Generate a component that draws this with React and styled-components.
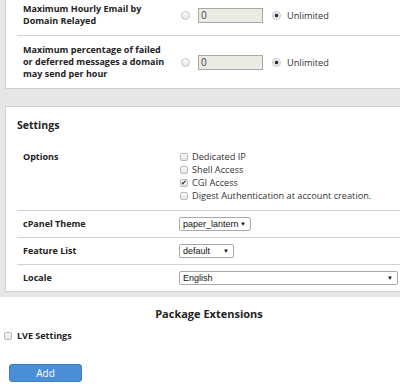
import React from 'react';
import styled, {createGlobalStyle} from 'styled-components';

const GlobalStyle = createGlobalStyle`
    body {
        margin: 0;
        background: #fff;
        font-family: "Open Sans", "DejaVu Sans", sans-serif;
        color: #222;
    }
`;

const Page = styled.div`
    width: 400px;
    height: 390px;
    overflow: hidden;
`;

const Backdrop = styled.div`
    background: #e6e6e6;
    margin-top: -6px;
    padding: 0 0 5px 5px;
    display: flex;
    flex-direction: column;
    gap: 17px;
`;

const Panel = styled.div`
    background: #fff;
    border: 1px solid #cfcfcf;
    border-right: none;
    padding: 0 0 0 11px;
`;

const PanelTitle = styled.h3`
    margin: 0;
    padding: 10px 0 11px 0;
    font-size: 10.5px;
    line-height: 16px;
    font-weight: 700;
    color: #222;
`;

const Row = styled.div`
    display: grid;
    grid-template-columns: 162px 1fr;
    align-items: ${props => props.top ? 'start' : 'center'};
    padding: ${props => props.pad || '6px 0'};
    border-bottom: 1px solid #d2d2d2;
    &:last-child {
        border-bottom: none;
    }
`;

const Label = styled.div`
    padding-left: 6px;
    white-space: pre-line;
    font-size: 9px;
    font-weight: 700;
    line-height: ${props => props.lh || '12px'};
    color: #222;
`;

const Controls = styled.div`
    display: flex;
    align-items: center;
`;

const Radio = styled.span`
    display: inline-block;
    box-sizing: border-box;
    width: 9px;
    height: 9px;
    margin-left: ${props => props.ml || 0}px;
    border-radius: 50%;
    border: 1px solid #c4c4c4;
    background: ${props => props.checked
        ? 'radial-gradient(circle, #333 0 1.6px, #f2f2f2 2.2px)'
        : 'linear-gradient(#fafafa, #e8e8e8)'};
`;

const NumberBox = styled.span`
    box-sizing: border-box;
    width: 65px;
    height: 15px;
    margin-left: 8px;
    padding-left: 2px;
    background: #ebebe4;
    border: 1px solid #a9a9a9;
    font-size: 10px;
    line-height: 13px;
    color: #444;
`;

const RadioText = styled.span`
    margin-left: 6px;
    font-size: 9.2px;
    color: #333;
`;

const CheckList = styled.div`
    display: flex;
    flex-direction: column;
`;

const CheckItem = styled.label`
    display: flex;
    align-items: center;
    height: 13px;
    padding-left: ${props => props.pl ?? 1}px;
    font-size: ${props => props.size || 9.2}px;
    font-weight: ${props => props.bold ? 700 : 400};
    color: ${props => props.bold ? '#222' : '#333'};
`;

const Box = styled.span`
    display: inline-flex;
    align-items: center;
    justify-content: center;
    box-sizing: border-box;
    width: 8px;
    height: 8px;
    margin-right: ${props => props.gap || 4}px;
    border: 1px solid #b9b9b9;
    border-radius: 2px;
    background: linear-gradient(#fbfbfb, #e4e4e4);
    font-size: 7px;
    line-height: 1;
    color: #222;
`;

const Select = styled.div`
    box-sizing: border-box;
    display: flex;
    align-items: center;
    justify-content: space-between;
    width: ${props => props.w}px;
    height: 14px;
    padding: 0 4px 0 3px;
    border: 1px solid #a8a8a8;
    border-radius: 2px;
    background: #fff;
    font-family: "Liberation Sans", Arial, sans-serif;
    font-size: 9px;
    color: #111;
`;

const Arrow = styled.span`
    font-size: 6px;
    color: #111;
`;

const Extensions = styled.div`
    padding: 9px 0 0 0;
`;

const ExtTitle = styled.h3`
    margin: 0;
    padding-left: 18px;
    text-align: center;
    font-size: 11px;
    line-height: 16px;
    font-weight: 700;
    color: #222;
`;

const ExtRow = styled.div`
    margin-top: 7px;
    padding-left: 4px;
`;

const AddButton = styled.button`
    display: block;
    box-sizing: border-box;
    width: 73px;
    height: 18px;
    margin: 22px 0 0 9px;
    padding: 0;
    border: 1px solid #3a7bc2;
    border-radius: 3px;
    background: #4a8fd6;
    color: #fff;
    font-family: "Open Sans", sans-serif;
    font-size: 10px;
`;

const limits = [
    {label: 'Maximum Hourly Email by\nDomain Relayed', pad: '8px 0'},
    {label: 'Maximum percentage of failed\nor deferred messages a domain\nmay send per hour', pad: '8px 0'},
];

const options = [
    {name: 'Dedicated IP'},
    {name: 'Shell Access'},
    {name: 'CGI Access', checked: true},
    {name: 'Digest Authentication at account creation.'},
];

const selects = [
    {label: 'cPanel Theme', value: 'paper_lantern', w: 72},
    {label: 'Feature List', value: 'default', w: 55},
    {label: 'Locale', value: 'English', w: 219},
];

const App = () => (
    <Page>
        <GlobalStyle />
        <Backdrop>
            <Panel>
                {limits.map(l => (
                    <Row key={l.label} pad={l.pad}>
                        <Label>{l.label}</Label>
                        <Controls>
                            <Radio ml={2} />
                            <NumberBox>0</NumberBox>
                            <Radio ml={9} checked />
                            <RadioText>Unlimited</RadioText>
                        </Controls>
                    </Row>
                ))}
            </Panel>
            <Panel>
                <PanelTitle>Settings</PanelTitle>
                <Row top pad="6px 0 8px 0">
                    <Label lh="13px">Options</Label>
                    <CheckList>
                        {options.map(o => (
                            <CheckItem key={o.name}>
                                <Box>{o.checked ? '✔' : ''}</Box>
                                {o.name}
                            </CheckItem>
                        ))}
                    </CheckList>
                </Row>
                {selects.map(s => (
                    <Row key={s.label}>
                        <Label>{s.label}</Label>
                        <Select w={s.w}>
                            <span>{s.value}</span>
                            <Arrow>▼</Arrow>
                        </Select>
                    </Row>
                ))}
            </Panel>
        </Backdrop>
        <Extensions>
            <ExtTitle>Package Extensions</ExtTitle>
            <ExtRow>
                <CheckItem bold pl={0} size={9}>
                    <Box gap={5}></Box>
                    LVE Settings
                </CheckItem>
            </ExtRow>
            <AddButton>Add</AddButton>
        </Extensions>
    </Page>
);

export default App;
